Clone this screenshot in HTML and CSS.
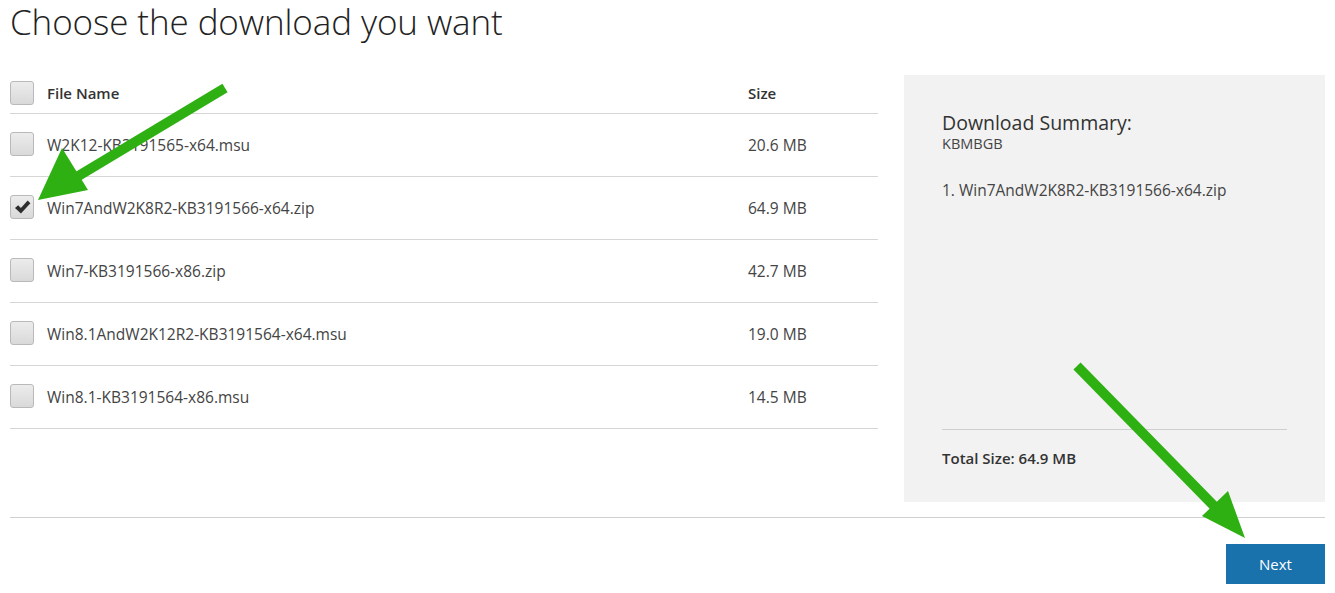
FILE: index.html
```html
<!DOCTYPE html>
<html>
<head>
<meta charset="utf-8">
<link rel="stylesheet" href="styles.css">
</head>
<body>
<div class="page">
  <h1 class="title">Choose the download you want</h1>
  <div class="main">
    <div class="table">
      <div class="row head">
        <span class="cb"></span>
        <span class="name">File Name</span>
        <span class="size">Size</span>
      </div>
      <div class="row">
        <span class="cb"></span>
        <span class="name">W2K12-KB3191565-x64.msu</span>
        <span class="size">20.6 MB</span>
      </div>
      <div class="row">
        <span class="cb checked"><svg viewBox="0 0 24 24" width="19" height="19"><path d="M2.5 12.5 L6.5 9 L10 12.5 L18.5 3 L22 6.5 L10 19.5 Z" fill="#2e2e2e"/></svg></span>
        <span class="name">Win7AndW2K8R2-KB3191566-x64.zip</span>
        <span class="size">64.9 MB</span>
      </div>
      <div class="row">
        <span class="cb"></span>
        <span class="name">Win7-KB3191566-x86.zip</span>
        <span class="size">42.7 MB</span>
      </div>
      <div class="row">
        <span class="cb"></span>
        <span class="name">Win8.1AndW2K12R2-KB3191564-x64.msu</span>
        <span class="size">19.0 MB</span>
      </div>
      <div class="row">
        <span class="cb"></span>
        <span class="name">Win8.1-KB3191564-x86.msu</span>
        <span class="size">14.5 MB</span>
      </div>
    </div>
    <div class="summary">
      <div class="sum-title">Download Summary:</div>
      <div class="sum-sub">KBMBGB</div>
      <ol class="sum-list">
        <li>1. Win7AndW2K8R2-KB3191566-x64.zip</li>
      </ol>
      <div class="sum-total">Total Size: 64.9 MB</div>
    </div>
  </div>
  <div class="footer">
    <button class="next">Next</button>
  </div>
</div>
<svg class="arrows" width="1335" height="593" viewBox="0 0 1335 593">
  <g fill="#2eb012" stroke="#2eb012">
    <line x1="225" y1="88" x2="75" y2="178" stroke-width="10"/>
    <polygon points="38,200 88,190 62,148" stroke="none"/>
    <line x1="1077" y1="366" x2="1215" y2="507" stroke-width="10"/>
    <polygon points="1245,538 1202,516 1228,491" stroke="none"/>
  </g>
</svg>
</body>
</html>
```
FILE: styles.css
```css
html, body {
  margin: 0;
  padding: 0;
  background: #fff;
}
body {
  font-family: "Open Sans", "Noto Sans", sans-serif;
  color: #333;
  position: relative;
  width: 1335px;
  height: 593px;
  overflow: hidden;
}
.page {
  padding: 0 10px;
}
.title {
  margin: 0;
  padding-top: 1px;
  font-weight: 300;
  font-size: 35px;
  line-height: 42px;
  color: #222;
  letter-spacing: -0.1px;
}
.main {
  display: flex;
  gap: 26px;
  margin-top: 32px;
}
.table {
  width: 868px;
}
.row {
  display: flex;
  align-items: center;
  height: 62px;
  border-bottom: 1px solid #d6d6d6;
  font-size: 15.5px;
  color: #444;
}
.row.head {
  height: 38px;
  font-weight: 600;
  color: #333;
  font-size: 15px;
}
.row.head .name,
.row.head .size {
  margin-top: -3px;
}
.cb {
  width: 22px;
  height: 22px;
  border: 1px solid #b9b9b9;
  border-radius: 3px;
  background: linear-gradient(#ececec, #d9d9d9);
  box-sizing: content-box;
  display: flex;
  align-items: center;
  justify-content: center;
  flex: none;
}
.row .cb {
  margin-top: -2px;
}
.name {
  margin-left: 13px;
  flex: 1;
}
.size {
  width: 130px;
}
.summary {
  width: 421px;
  height: 427px;
  background: #f2f2f2;
  padding: 0 38px;
  box-sizing: border-box;
  display: flex;
  flex-direction: column;
}
.sum-title {
  margin-top: 36px;
  font-size: 19.5px;
  line-height: 24px;
  color: #333;
}
.sum-sub {
  font-size: 14.5px;
  line-height: 18px;
  color: #444;
}
.sum-list {
  list-style: none;
  margin: 26px 0 0;
  padding: 0;
  flex: 1;
  font-size: 15.5px;
  color: #444;
}
.sum-total {
  border-top: 1px solid #cfcfcf;
  padding-top: 18px;
  height: 54px;
  font-weight: 600;
  font-size: 15px;
  color: #333;
}
.footer {
  margin-top: 15px;
  border-top: 1px solid #d0d0d0;
  padding-top: 26px;
  display: flex;
  justify-content: flex-end;
}
.next {
  width: 99px;
  height: 40px;
  border: none;
  background: #1a72ad;
  color: #fff;
  font-family: "Open Sans", "Noto Sans", sans-serif;
  font-size: 15px;
}
.arrows {
  position: absolute;
  left: 0;
  top: 0;
  pointer-events: none;
}
```
